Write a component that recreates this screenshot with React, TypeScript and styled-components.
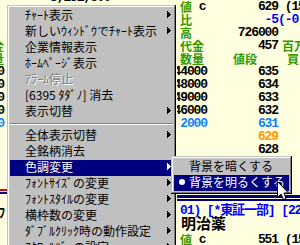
import React from 'react'
import styled, { createGlobalStyle } from 'styled-components'

const colors = {
  paper: '#ffffe0',
  ink: '#000000',
  label: '#339900',
  blue: '#0000ff',
  sky: '#0a84ff',
  orange: '#ff9900',
  navy: '#000080',
  red: '#e00000',
  face: '#c0c0c0',
  shade: '#808080',
  white: '#ffffff'
}

type Tone = 'ink' | 'label' | 'blue' | 'sky' | 'orange'

const GlobalStyle = createGlobalStyle`
  html, body {
    margin: 0;
    padding: 0;
    background: ${colors.paper};
    overflow: hidden;
  }
`

const Screen = styled.div`
  position: relative;
  width: 300px;
  height: 245px;
  overflow: hidden;
  display: grid;
  grid-template-columns: 7px 170px 123px;
  background: ${colors.paper};
  font-family: 'Liberation Mono', 'Noto Sans CJK JP', monospace;
  font-size: 13px;
  font-weight: bold;
  letter-spacing: -1.1px;
`

const Pane = styled.div`
  display: flex;
  flex-direction: column;
  min-width: 0;
  overflow: hidden;
`

const T = styled.span<{ $tone?: Tone }>`
  color: ${(p) => colors[p.$tone ?? 'ink']};
  white-space: pre;
`

// green captions are set a little smaller than the figures
const Label = styled.span`
  color: ${colors.label};
  font-family: 'Noto Sans CJK JP', sans-serif;
  font-size: 12px;
  letter-spacing: 0;
  white-space: pre;
`

// left pane: only its right edge peeks out from behind the menu
const StripRow = styled.div`
  flex: none;
  display: flex;
  justify-content: flex-end;
  height: 13px;
  line-height: 13px;
  padding-right: 3px;
  overflow: hidden;
  white-space: nowrap;
`

const StripRule = styled.div`
  flex: none;
  margin-top: 33px;
  height: 1px;
  border-top: 2px solid ${colors.red};
  border-bottom: 2px solid ${colors.navy};
`

const StripTail = styled(StripRow)`
  margin-top: 13px;
`

// top of the middle pane, cut off by the menu
const TopClip = styled.div`
  height: 5px;
  overflow: hidden;
  padding-left: 43px;
  white-space: nowrap;
  line-height: 13px;

  span {
    display: block;
    margin-top: -9px;
  }
`

// right pane: quote board
const Row = styled.div`
  flex: none;
  display: grid;
  grid-template-columns: 30px 71px 1fr;
  height: 13px;
  line-height: 13px;
  white-space: nowrap;
`

const Cell = styled.div<{ $end?: boolean; $indent?: number }>`
  display: flex;
  align-items: center;
  justify-content: ${(p) => (p.$end ? 'flex-end' : 'flex-start')};
  padding-left: ${(p) => p.$indent ?? 0}px;
  min-width: 0;
`

const Gap = styled.div<{ $h: number }>`
  flex: none;
  height: ${(p) => p.$h}px;
`

const NavyRule = styled.div`
  flex: none;
  height: 1px;
  border-top: 3px solid ${colors.navy};
  border-bottom: 2px solid ${colors.navy};
`

const Banner = styled.div`
  flex: none;
  height: 12px;
  line-height: 12px;
  margin-top: 4px;
  padding-left: 3px;
  white-space: pre;
  color: ${colors.blue};
`

const Name = styled.div`
  flex: none;
  height: 12px;
  line-height: 12px;
  padding-left: 4px;
  font-family: 'Noto Sans CJK JP', sans-serif;
  font-size: 15px;
  letter-spacing: 0;
  color: ${colors.ink};
  white-space: nowrap;
`

// popup menus
const MenuBox = styled.div<{ $x: number; $y: number; $w: number }>`
  position: absolute;
  left: ${(p) => p.$x}px;
  top: ${(p) => p.$y}px;
  width: ${(p) => p.$w}px;
  box-sizing: border-box;
  padding: 3px;
  background: ${colors.face};
  box-shadow:
    inset -1px -1px ${colors.ink},
    inset 1px 1px ${colors.face},
    inset -2px -2px ${colors.shade},
    inset 2px 2px ${colors.white};
  font-family: 'Noto Sans CJK JP', sans-serif;
  font-weight: normal;
  font-size: 12px;
  letter-spacing: 0;
`

const MenuItem = styled.div<{ $active?: boolean; $disabled?: boolean }>`
  display: grid;
  grid-template-columns: 15px 1fr 13px;
  align-items: center;
  height: 16px;
  box-sizing: border-box;
  padding-bottom: 3px;
  line-height: 13px;
  white-space: nowrap;
  background: ${(p) => (p.$active ? colors.navy : 'transparent')};
  color: ${(p) =>
    p.$active ? colors.white : p.$disabled ? colors.shade : colors.ink};
  text-shadow: ${(p) => (p.$disabled ? `1px 1px 0 ${colors.white}` : 'none')};
`

const Mark = styled.span`
  display: flex;
  justify-content: center;
`

const Bullet = styled.span`
  width: 6px;
  height: 6px;
  border-radius: 50%;
  background: currentColor;
`

const Caret = styled.span`
  display: flex;
  justify-content: flex-end;
  padding-right: 2px;
`

const Separator = styled.div`
  display: flex;
  align-items: center;
  height: 8px;

  &::before {
    content: '';
    flex: 1;
    border-top: 1px solid ${colors.shade};
    border-bottom: 1px solid ${colors.white};
  }
`

const Pointer = styled.svg`
  position: absolute;
  left: 277px;
  top: 181px;
`

type Entry =
  | { label: string; sub?: boolean; disabled?: boolean; active?: boolean; checked?: boolean }
  | 'sep'

const mainMenu: Entry[] = [
  { label: 'ﾁｬｰﾄ表示', sub: true },
  { label: '新しいｳｨﾝﾄﾞｳでﾁｬｰﾄ表示', sub: true },
  { label: '企業情報表示' },
  { label: 'ﾎｰﾑﾍﾟｰｼﾞ表示' },
  { label: 'ｱﾗｰﾑ停止', disabled: true },
  { label: '[6395 ﾀﾀﾞﾉ] 消去' },
  { label: '表示切替', sub: true },
  'sep',
  { label: '全体表示切替', sub: true },
  { label: '全銘柄消去' },
  { label: '色調変更', sub: true, active: true },
  { label: 'ﾌｫﾝﾄｻｲｽﾞの変更', sub: true },
  { label: 'ﾌｫﾝﾄｽﾀｲﾙの変更', sub: true },
  { label: '横枠数の変更', sub: true },
  { label: 'ﾀﾞﾌﾞﾙｸﾘｯｸ時の動作設定', sub: true },
  { label: 'ｽｸﾛｰﾙﾊﾞｰの設定', sub: true }
]

const toneMenu: Entry[] = [
  { label: '背景を暗くする' },
  { label: '背景を明るくする', active: true, checked: true }
]

const book: { vol: string; price: string; tone?: Tone }[] = [
  { vol: '44000', price: '635' },
  { vol: '48000', price: '634' },
  { vol: '49000', price: '633' },
  { vol: '46000', price: '632' },
  { vol: '2000', price: '631', tone: 'sky' },
  { vol: '', price: '629', tone: 'orange' },
  { vol: '', price: '628' }
]

const leftEdge: { text: string; tone?: Tone }[] = [
  { text: '' },
  { text: '' },
  { text: '' },
  { text: '代金', tone: 'label' },
  { text: '数量', tone: 'label' },
  { text: '000' },
  { text: '000' },
  { text: '000' },
  { text: '000' },
  { text: '000', tone: 'sky' }
]

function Arrow() {
  return (
    <svg width="4" height="7" viewBox="0 0 4 7" fill="currentColor">
      <path d="M0 0h1v7H0zM1 1h1v5H1zM2 2h1v3H2zM3 3h1v1H3z" />
    </svg>
  )
}

function Menu({ entries, x, y, w }: { entries: Entry[]; x: number; y: number; w: number }) {
  return (
    <MenuBox $x={x} $y={y} $w={w}>
      {entries.map((e, i) =>
        e === 'sep' ? (
          <Separator key={i} />
        ) : (
          <MenuItem key={i} $active={e.active} $disabled={e.disabled}>
            <Mark>{e.checked && <Bullet />}</Mark>
            <span>{e.label}</span>
            <Caret>{e.sub && <Arrow />}</Caret>
          </MenuItem>
        )
      )}
    </MenuBox>
  )
}

function PriceRow({ price, note }: { price: string; note: string }) {
  return (
    <Row>
      <Cell $indent={3}>
        <Label>値</Label>
        <T> c</T>
      </Cell>
      <Cell $end>
        <T>{price}</T>
      </Cell>
      <Cell>
        <T>{note}</T>
      </Cell>
    </Row>
  )
}

export default function App() {
  return (
    <>
      <GlobalStyle />
      <Screen>
        <Pane>
          {leftEdge.map((r, i) => (
            <StripRow key={i}>
              {r.tone === 'label' ? <Label>{r.text}</Label> : <T $tone={r.tone}>{r.text}</T>}
            </StripRow>
          ))}
          <Gap $h={26} />
          <StripRule />
          <StripTail>
            <T>ﾌ</T>
          </StripTail>
        </Pane>

        <Pane>
          <TopClip>
            <T>3,251,800</T>
          </TopClip>
        </Pane>

        <Pane>
          <PriceRow price="629" note=" (15:00)" />
          <Row>
            <Cell $indent={3}>
              <Label>比</Label>
            </Cell>
            <Cell $end>
              <T $tone="blue">-5</T>
            </Cell>
            <Cell>
              <T $tone="blue">(-0.79%)</T>
            </Cell>
          </Row>
          <Row>
            <Cell $indent={3}>
              <Label>高</Label>
            </Cell>
            <Cell $end>
              <T>726000</T>
            </Cell>
            <Cell />
          </Row>
          <Row>
            <Cell $indent={3}>
              <Label>代金</Label>
            </Cell>
            <Cell $end>
              <T>457</T>
            </Cell>
            <Cell $indent={4}>
              <Label>百万</Label>
            </Cell>
          </Row>
          <Row>
            <Cell $indent={3}>
              <Label>数量</Label>
            </Cell>
            <Cell $indent={26}>
              <Label>値段</Label>
            </Cell>
            <Cell $indent={9}>
              <Label>買</Label>
            </Cell>
          </Row>
          {book.map((b) => (
            <Row key={b.price}>
              <Cell $end>
                <T $tone={b.tone}>{b.vol}</T>
              </Cell>
              <Cell $end>
                <T $tone={b.tone}>{b.price}</T>
              </Cell>
              <Cell />
            </Row>
          ))}
          <Gap $h={39} />
          <NavyRule />
          <Banner>01) [*東証一部] [22.1]</Banner>
          <Name>明治薬</Name>
          <Gap $h={4} />
          <PriceRow price="551" note=" (15:00)" />
        </Pane>

        <Menu entries={mainMenu} x={7} y={5} w={169} />
        <Menu entries={toneMenu} x={171} y={156} w={121} />

        <Pointer width="13" height="20" viewBox="0 0 13 20">
          <polygon
            points="0.5,0.5 0.5,16.5 4,13 6.5,18.5 9,17.5 7,12 11.5,12"
            fill={colors.white}
            stroke={colors.ink}
            strokeWidth="1"
            strokeLinejoin="miter"
          />
        </Pointer>
      </Screen>
    </>
  )
}
